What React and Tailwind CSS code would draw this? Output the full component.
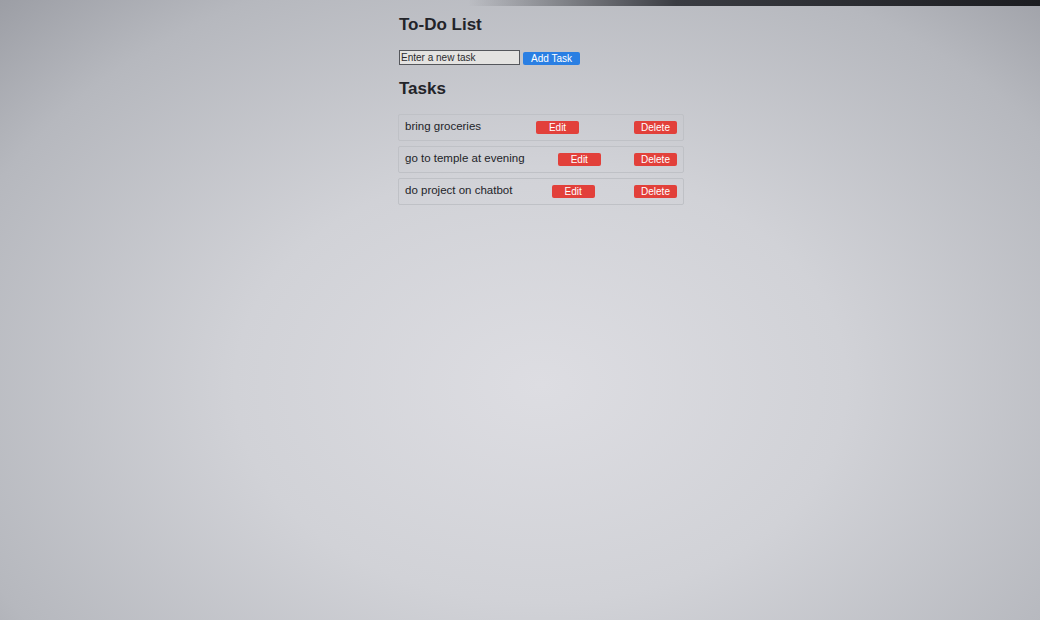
import { useState } from "react";

function App() {
    const [tasks] = useState([
        { id: 1, text: "bring groceries" },
        { id: 2, text: "go to temple at evening" },
        { id: 3, text: "do project on chatbot" },
    ])

    const btnRed = "w-[43px] h-[13px] bg-[#e2403a] text-white text-[10px] leading-[13px] rounded-[2px] text-center"

    return (
        <div className="min-h-[620px] w-full bg-[radial-gradient(ellipse_at_52%_62%,#dddde2_0%,#d1d2d7_40%,#b6b8be_80%,#9c9ea5_100%)] font-['Liberation_Sans',Arial,sans-serif] text-[#232429]">
            <div className="h-[6px] bg-[linear-gradient(90deg,transparent_0%,transparent_45%,#3a3c42_65%,#1c1d21_100%)]"></div>
            <div className="ml-[399px] w-[285px] pt-[9px]">
                <h2 className="text-[17px] leading-[20px] font-bold">To-Do List</h2>
                <div className="mt-[15px] flex items-center gap-[3px]">
                    <input
                        className="w-[121px] h-[15px] border border-[#55575c] bg-[#e4e3e1] px-[1px] text-[10px] leading-[13px] text-[#2a2b2f] placeholder:text-[#2a2b2f] outline-none"
                        placeholder="Enter a new task"
                    />
                    <button className="w-[57px] h-[13px] mt-[2px] bg-[#2a7fe3] text-white text-[10px] leading-[13px] rounded-[2px]">Add Task</button>
                </div>
                <h2 className="mt-[14px] text-[17px] leading-[20px] font-bold">Tasks</h2>
                <div className="mt-[15px] -ml-[1px] flex flex-col gap-[5px]">
                    {tasks.map(item => {
                        return (
                            <div key={item.id} className="h-[27px] flex items-center justify-between border border-[#bfc1c6] rounded-[2px] pl-[6px] pr-[6px]">
                                <span className="text-[11.5px] leading-[14px] -mt-[4px]">{item.text}</span>
                                <button className={btnRed}>Edit</button>
                                <button className={btnRed}>Delete</button>
                            </div>
                        )
                    })}
                </div>
            </div>
        </div>
    );
}

export default App;
